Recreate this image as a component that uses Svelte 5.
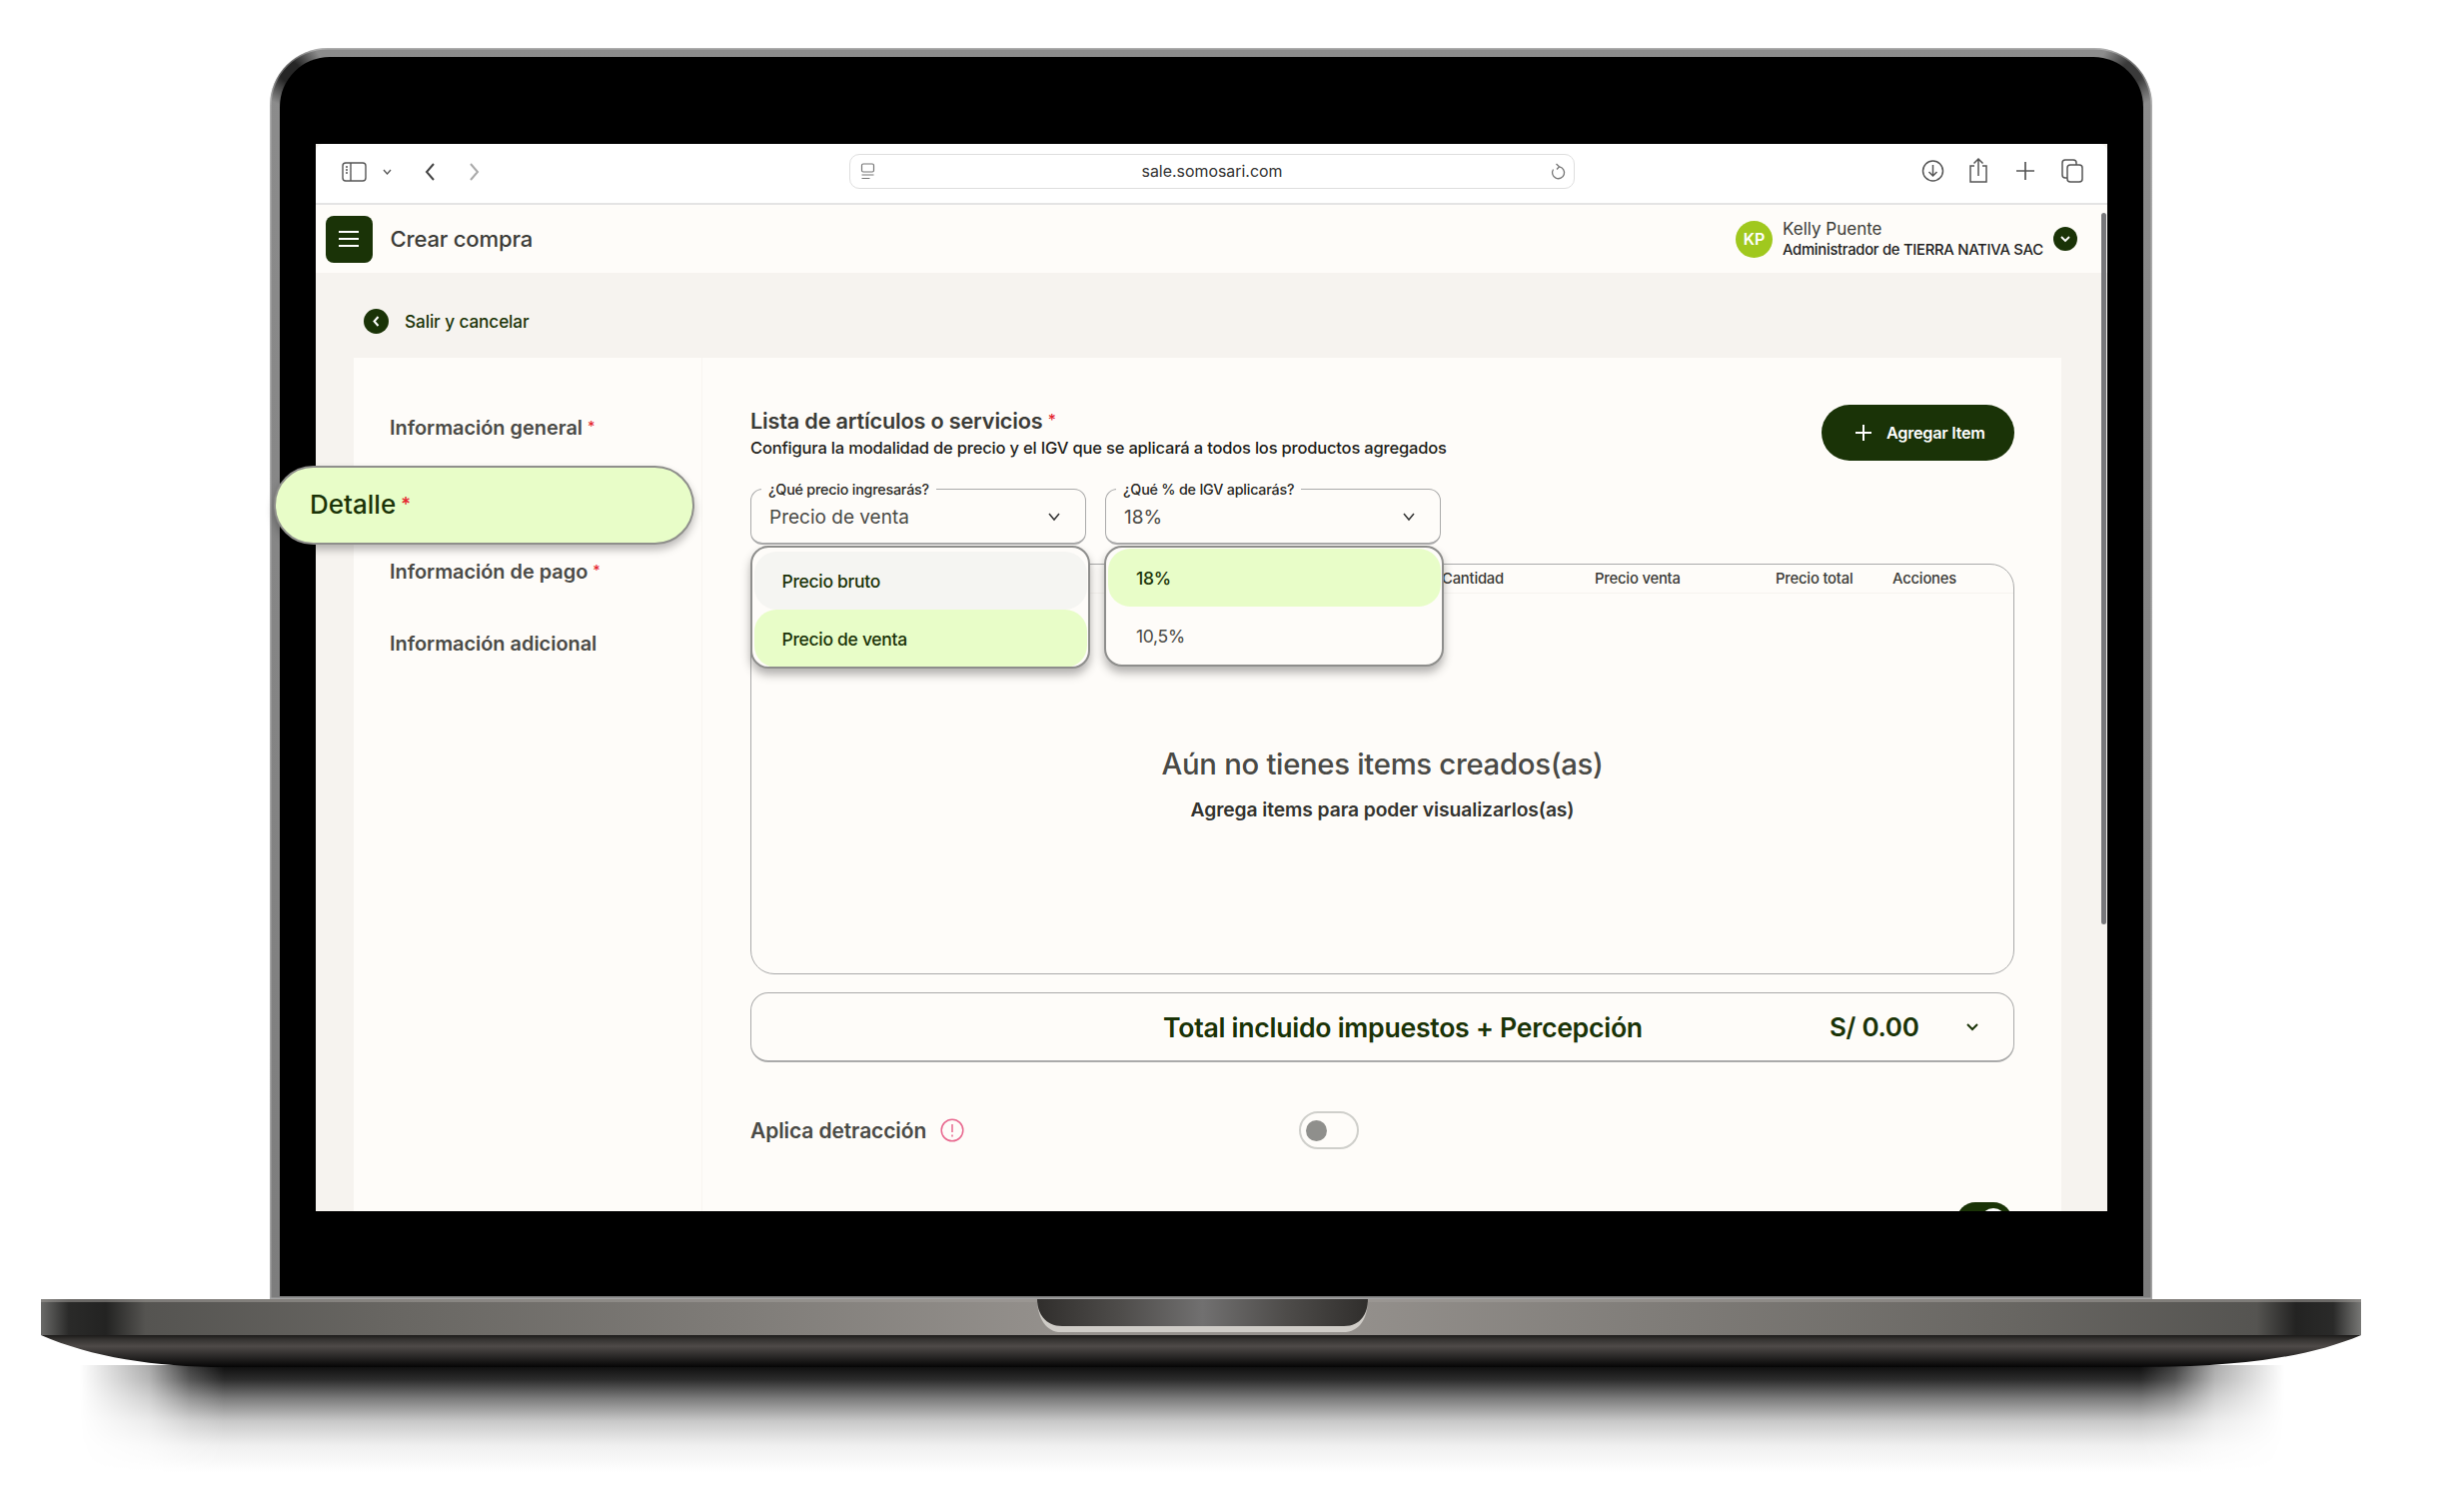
<script>
  const navItems = [
    { label: 'Información general', req: true },
    { label: 'Detalle', req: true, active: true },
    { label: 'Información de pago', req: true },
    { label: 'Información adicional', req: false }
  ];
  const columns = ['', 'Cantidad', 'Precio venta', 'Precio total', 'Acciones'];
</script>

<div class="stage">
  <div class="lid">
    <div class="bezel">
      <div class="screen">
        <div class="toolbar">
          <svg class="tb-left" width="150" height="26" viewBox="0 0 150 26" fill="none" stroke="#555" stroke-width="1.4">
            <rect x="1" y="4" width="23" height="18" rx="3"/>
            <path d="M9 4v18M4 8h2M4 11h2M4 14h2"/>
            <path d="M42 11l3.5 4 3.5-4" stroke-width="1.3"/>
            <path d="M92 5l-7 8 7 8" stroke-width="2" stroke="#444"/>
            <path d="M129 5l7 8-7 8" stroke-width="2" stroke="#aaa"/>
          </svg>
          <div class="url">
            <svg class="url-ic" width="16" height="18" viewBox="0 0 16 18" fill="none" stroke="#777" stroke-width="1.2">
              <rect x="1.5" y="1" width="12" height="8" rx="1.5"/>
              <path d="M1.5 12h12M1.5 15.5h8"/>
            </svg>
            <span>sale.somosari.com</span>
            <svg class="url-re" width="16" height="18" viewBox="0 0 16 18" fill="none" stroke="#777" stroke-width="1.3">
              <path d="M9.500 3.800A6 6 0 1 1 3.500 6.500"/><path d="M6.500 1L9.500 3.800 7 6.500"/>
            </svg>
          </div>
          <svg class="tb-right" width="162" height="28" viewBox="0 0 162 28" fill="none" stroke="#555" stroke-width="1.5">
            <circle cx="11.500" cy="14" r="10"/><path d="M11.500 8v11M7.500 15l4 4 4-4"/>
            <path d="M53 9h-4v16h16V9h-4"/><path d="M57 2v17M52.500 6.500L57 2l4.500 4.500"/>
            <path d="M104 5v18M95 14h18" stroke-width="1.7"/>
            <rect x="146" y="8" width="15" height="17" rx="3"/><path d="M146 21h-2a3 3 0 0 1-3-3V6a3 3 0 0 1 3-3h8a3 3 0 0 1 3 3v2"/>
          </svg>
        </div>

        <header class="appbar">
          <button class="menu" aria-label="Menú">
            <svg width="22" height="18" viewBox="0 0 22 18" stroke="#fff" stroke-width="2.200"><path d="M1 2h20M1 9h20M1 16h20"/></svg>
          </button>
          <h1>Crear compra</h1>
          <div class="user">
            <div class="avatar">KP</div>
            <div class="who">
              <div class="name">Kelly Puente</div>
              <div class="role">Administrador de TIERRA NATIVA SAC</div>
            </div>
            <div class="dot">
              <svg width="12" height="9" viewBox="0 0 12 9" fill="none" stroke="#fff" stroke-width="1.800"><path d="M2 2l4 4 4-4"/></svg>
            </div>
          </div>
        </header>

        <main class="content">
          <div class="back">
            <div class="dot back-dot">
              <svg width="9" height="13" viewBox="0 0 9 13" fill="none" stroke="#fff" stroke-width="2"><path d="M6.500 2L2.500 6.500l4 4.500"/></svg>
            </div>
            <span>Salir y cancelar</span>
          </div>

          <div class="card">
            <nav class="side">
              {#each navItems as item}
                <div class="nav-row">
                  {#if item.active}
                    <div class="pill">{item.label} <i>*</i></div>
                  {:else}
                    <span>{item.label}{#if item.req}&nbsp;<i>*</i>{/if}</span>
                  {/if}
                </div>
              {/each}
            </nav>

            <section class="main">
              <div class="head">
                <div>
                  <h2>Lista de artículos o servicios <i>*</i></h2>
                  <p>Configura la modalidad de precio y el IGV que se aplicará a todos los productos agregados</p>
                </div>
                <button class="add">
                  <svg width="20" height="20" viewBox="0 0 20 20" stroke="#fff" stroke-width="2"><path d="M10 2v16M2 10h16"/></svg>
                  <span>Agregar Item</span>
                </button>
              </div>

              <div class="selects">
                <div class="select">
                  <label>¿Qué precio ingresarás?</label>
                  <span>Precio de venta</span>
                  <svg width="14" height="10" viewBox="0 0 14 10" fill="none" stroke="#333" stroke-width="1.500"><path d="M2 2l5 6 5-6"/></svg>
                  <div class="drop">
                    <div class="opt hover">Precio bruto</div>
                    <div class="opt on">Precio de venta</div>
                  </div>
                </div>
                <div class="select">
                  <label>¿Qué % de IGV aplicarás?</label>
                  <span>18%</span>
                  <svg width="14" height="10" viewBox="0 0 14 10" fill="none" stroke="#333" stroke-width="1.500"><path d="M2 2l5 6 5-6"/></svg>
                  <div class="drop drop2">
                    <div class="opt on">18%</div>
                    <div class="opt plain">10,5%</div>
                  </div>
                </div>
              </div>

              <div class="table">
                <div class="thead">
                  {#each columns as c}<div>{c}</div>{/each}
                </div>
                <div class="empty">
                  <h3>Aún no tienes items creados(as)</h3>
                  <p>Agrega items para poder visualizarlos(as)</p>
                </div>
              </div>

              <div class="total">
                <strong>Total incluido impuestos + Percepción</strong>
                <strong>S/ 0.00</strong>
                <svg width="14" height="10" viewBox="0 0 14 10" fill="none" stroke="#1a3307" stroke-width="2"><path d="M2 2l5 5 5-5"/></svg>
              </div>

              <div class="detr">
                <span>Aplica detracción</span>
                <svg width="24" height="24" viewBox="0 0 24 24" fill="none" stroke="#e8688f" stroke-width="1.500"><circle cx="12" cy="12" r="10.800"/><path d="M12 6v8M12 16.500v2"/></svg>
                <div class="toggle"><b></b></div>
              </div>

              <div class="toggle-on"><b></b></div>
            </section>
          </div>
        </main>

        <div class="scroll"></div>
      </div>
    </div>
  </div>

  <svg class="base" width="2322" height="68" viewBox="0 0 2322 68">
    <defs>
      <linearGradient id="g1" x1="0" x2="1" y1="0" y2="0">
        <stop offset="0" stop-color="#6a6a68"/>
        <stop offset="0.012" stop-color="#2a2a29"/>
        <stop offset="0.028" stop-color="#232322"/>
        <stop offset="0.045" stop-color="#555451"/>
        <stop offset="0.15" stop-color="#686662"/>
        <stop offset="0.45" stop-color="#96928e"/>
        <stop offset="0.55" stop-color="#96928e"/>
        <stop offset="0.85" stop-color="#686662"/>
        <stop offset="0.955" stop-color="#555451"/>
        <stop offset="0.972" stop-color="#232322"/>
        <stop offset="0.988" stop-color="#2a2a29"/>
        <stop offset="1" stop-color="#777775"/>
      </linearGradient>
      <linearGradient id="g2" x1="0" x2="0" y1="0" y2="1">
        <stop offset="0" stop-color="#1c1b1a"/>
        <stop offset="0.12" stop-color="#33312f"/>
        <stop offset="0.35" stop-color="#4e4a48"/>
        <stop offset="0.65" stop-color="#2c2a29"/>
        <stop offset="1" stop-color="#050505"/>
      </linearGradient>
      <linearGradient id="g3" x1="0" x2="1" y1="0" y2="0">
        <stop offset="0" stop-color="#302e2c"/>
        <stop offset="0.25" stop-color="#4e4c4a"/>
        <stop offset="0.5" stop-color="#717070"/>
        <stop offset="0.75" stop-color="#4e4c4a"/>
        <stop offset="1" stop-color="#302e2c"/>
      </linearGradient>
    </defs>
    <path d="M0 36V0H2322V36Z" fill="url(#g1)"/>
    <rect x="0" y="0" width="2322" height="3" fill="#a09d99" opacity=".55"/>
    <path d="M0 36C50 58 115 68 183 68H2099C2200 68 2270 58 2322 36Z" fill="url(#g2)"/>
    <path d="M997 0H1328C1328 16 1322 31 1306 33H1018C1004 31 997 16 997 0Z" fill="#cfccc7"/>
    <path d="M997 0H1328C1328 14 1321 27 1304 27H1022C1005 27 997 14 997 0Z" fill="url(#g3)"/>
  </svg>
  <div class="shadow"></div>
</div>

<style>
  :global(body) { margin: 0; background: #fff; }
  * { box-sizing: border-box; }
  i { color: #e5262f; font-style: normal; font-size: .72em; font-weight: 500; vertical-align: .22em; }
  h1, h2, h3, p { margin: 0; font-weight: inherit; }
  button { border: 0; padding: 0; font: inherit; }

  .stage {
    position: relative;
    width: 2466px;
    height: 1512px;
    overflow: hidden;
    background: #fff;
    padding-top: 48px;
    font-family: Inter, "Liberation Sans", sans-serif;
    color: #33332f;
  }
  .lid {
    margin-left: 270px;
    width: 1884px;
    height: 1252px;
    padding: 9px 9px 3px 10px;
    border-radius: 58px 58px 0 0;
    background:
      radial-gradient(circle 34px at 20px 24px, #262626 30%, transparent),
      radial-gradient(circle 34px at 1864px 24px, #3a3a3a 30%, transparent),
      linear-gradient(#8c8c8c, #7d7d7d);
    box-shadow: inset 0 0 0 1.500px rgba(255, 255, 255, .3);
    position: relative;
    z-index: 2;
  }
  .bezel {
    height: 100%;
    padding: 87px 36px 0 36px;
    border-radius: 50px 50px 0 0;
    background: #000;
  }
  .screen {
    position: relative;
    height: 1068px;
    clip-path: inset(-10px 0 0 -100px);
    background: #f6f3ef;
  }

  .toolbar {
    height: 61px;
    background: #fff;
    border-bottom: 2px solid #e4e4e4;
    border-radius: 8px 8px 0 0;
    display: flex;
    align-items: center;
    padding-left: 26px;
    padding-right: 24px;
  }
  .tb-left { flex: none; margin-top: -3px; }
  .url {
    margin-left: 358px;
    width: 726px;
    height: 35px;
    margin-top: -4px;
    border: 1.500px solid #dedede;
    border-radius: 10px;
    display: flex;
    align-items: center;
    justify-content: space-between;
    padding: 0 8px 0 10px;
    font-size: 15.900px;
    color: #333;
  }
  .url span { transform: translateX(-1px); }
  .tb-right { margin-left: auto; margin-top: -5px; }

  .appbar {
    height: 68px;
    background: #fefcf9;
    display: flex;
    align-items: center;
    padding-left: 9.500px;
    padding-right: 30px;
  }
  .menu {
    width: 47px;
    height: 47px;
    border-radius: 8px;
    background: #1a3307;
    display: flex;
    align-items: center;
    justify-content: center;
  }
  .appbar h1 {
    margin-left: 18px;
    font-size: 22.100px;
    font-weight: 500;
    color: #3b3b37;
    letter-spacing: -0.2px;
  }
  .user { margin-left: auto; display: flex; align-items: center; }
  .avatar {
    width: 37px;
    height: 37px;
    border-radius: 50%;
    background: #a0c81e;
    color: #fff;
    font-size: 16px;
    font-weight: 600;
    display: flex;
    align-items: center;
    justify-content: center;
  }
  .who { margin-left: 10px; width: 271px; padding-top: 1px; }
  .name { font-size: 17px; line-height: 21px; color: #3b3b37; }
  .role { font-size: 14.850px; line-height: 20px; font-weight: 500; color: #20201c; letter-spacing: -0.300px; white-space: nowrap; }
  .dot {
    width: 24px;
    height: 24px;
    border-radius: 50%;
    background: #1a3307;
    display: flex;
    align-items: center;
    justify-content: center;
    flex: none;
  }

  .content { height: 939px; }
  .back {
    height: 85px;
    padding-left: 48px;
    padding-top: 12px;
    display: flex;
    align-items: center;
    gap: 16px;
    font-size: 17.200px;
    font-weight: 500;
    color: #1a3307;
    letter-spacing: -0.100px;
  }
  .back-dot { width: 25px; height: 25px; }
  .card {
    margin: 0 46px 0 38px;
    height: 900px;
    background: #fefcf9;
    display: flex;
  }
  .side {
    width: 349px;
    flex: none;
    padding-top: 34px;
    border-right: 1px solid #f8f5f1;
    font-size: 19.900px;
    font-weight: 600;
    color: #4a4a46;
  }
  .nav-row {
    position: relative;
    height: 72px;
    padding-left: 36px;
    display: flex;
    align-items: center;
  }
  .pill {
    position: absolute;
    left: -80px;
    top: 2px;
    width: 421px;
    height: 79px;
    padding: 0 0 2px 34px;
    display: flex;
    align-items: center;
    gap: 5px;
    border-radius: 40px;
    background: #e8fdc8;
    border: 2px solid #8f8f8c;
    box-shadow: 0 5px 9px rgba(0, 0, 0, .28);
    font-size: 26px;
    font-weight: 500;
    color: #1a3307;
    z-index: 5;
  }

  .main { flex: 1; padding: 47px 47px 0 48px; }
  .head { height: 56px; display: flex; justify-content: space-between; align-items: flex-start; }
  .head h2 { font-size: 21.700px; line-height: 32px; margin-top: 0; padding-bottom: 1px; font-weight: 600; color: #3b3b37; letter-spacing: -0.200px; }
  .head p { font-size: 16.550px; line-height: 20px; font-weight: 500; color: #1f1f1b; letter-spacing: -0.200px; white-space: nowrap; }
  .add {
    width: 193px;
    height: 56px;
    border-radius: 28px;
    background: #1a3307;
    color: #fff;
    display: flex;
    align-items: center;
    padding-left: 32px;
    gap: 13px;
    font-size: 16.300px;
    font-weight: 600;
    font-family: inherit;
  }
  .add span { letter-spacing: -0.300px; }

  .selects { margin-top: 28px; display: flex; gap: 19.500px; }
  .select {
    position: relative;
    width: 335.500px;
    height: 56px;
    border: 1.500px solid #aaa;
    border-bottom-width: 2px;
    border-radius: 12px;
    display: flex;
    align-items: center;
    justify-content: space-between;
    padding: 0 24px 0 18px;
    font-size: 19px;
    color: #4a4a46;
  }
  .select > span { margin-top: 1px; }
  .select > svg { margin-top: 1px; }
  .select label {
    position: absolute;
    left: 10px;
    top: -9px;
    padding: 0 7px;
    background: #fefcf9;
    font-size: 14.300px;
    line-height: 17px;
    font-weight: 500;
    color: #2a2a26;
    letter-spacing: -0.200px;
  }
  .drop {
    position: absolute;
    left: -1.500px;
    top: 56px;
    width: 340px;
    height: 123px;
    padding: 4px 1px 2px 2px;
    background: #fefcf9;
    border: 2px solid #8e8e8c;
    border-radius: 18px;
    box-shadow: 0 6px 10px rgba(0, 0, 0, .3);
    z-index: 4;
    overflow: hidden;
  }
  .drop2 { left: -2px; height: 121px; padding-top: 1px; }
  .opt {
    height: 58px;
    padding-left: 28px;
    border-radius: 22px;
    display: flex;
    align-items: center;
    font-size: 17.500px;
    font-weight: 500;
    letter-spacing: -0.300px;
    color: #1a3307;
  }
  .hover { background: #f5f5f2; }
  .on { background: #e8fdc8; }
  .plain { font-weight: 400; color: #4a4a46; }

  .table {
    position: relative;
    margin-top: 19px;
    height: 411px;
    border: 1.500px solid #aaa;
    border-radius: 24px;
  }
  .thead {
    height: 29px;
    display: grid;
    grid-template-columns: 691px 153px 181px 117px 1fr;
    align-items: center;
    border-bottom: 1px solid #f6f3ef;
    font-size: 14.800px;
    font-weight: 500;
    color: #3b3b37;
    letter-spacing: -0.200px;
  }
  .empty { padding-top: 153px; text-align: center; }
  .empty h3 { font-size: 29.300px; line-height: 36px; font-weight: 500; color: #4a4a46; letter-spacing: -0.300px; }
  .empty p { margin-top: 15px; font-size: 19.300px; line-height: 24px; font-weight: 600; color: #33332f; letter-spacing: -0.100px; }

  .total {
    margin-top: 18px;
    height: 70px;
    padding-left: 412px;
    border: 1.500px solid #aaa;
    border-bottom-width: 2px;
    border-radius: 18px;
    display: grid;
    grid-template-columns: 667px 136px auto;
    align-items: center;
    font-size: 26.700px;
    color: #1a3307;
  }
  .total strong { font-weight: 600; letter-spacing: -0.300px; }
  .total strong + strong { font-size: 26px; }

  .detr {
    margin-top: 49px;
    height: 38px;
    display: grid;
    grid-template-columns: 190px 359px 60px;
    align-items: center;
    font-size: 21px;
    font-weight: 600;
    color: #4a4a46;
    letter-spacing: -0.100px;
  }
  .toggle {
    width: 60px;
    height: 38px;
    border-radius: 19px;
    border: 2px solid #cfcfcb;
    background: #fefcf9;
    display: flex;
    align-items: center;
    padding-left: 5px;
  }
  .toggle b { width: 21px; height: 21px; border-radius: 50%; background: #8f8f8c; }
  .toggle-on {
    margin: 53px 2px 0 auto;
    width: 56px;
    height: 38px;
    border-radius: 19px;
    background: #1a3307;
    display: flex;
    align-items: center;
    justify-content: flex-end;
    padding-right: 6px;
  }
  .toggle-on b { width: 26px; height: 26px; border-radius: 50%; background: #fff; }

  .scroll {
    position: absolute;
    right: 1px;
    top: 69px;
    width: 5px;
    height: 712px;
    border-radius: 3px;
    background: #77777a;
  }

  .base {
    display: block;
    margin: 0 0 0 41px;
    position: relative;
    z-index: 2;
  }
  .shadow {
    position: absolute;
    left: 80px;
    top: 1366px;
    width: 2206px;
    height: 112px;
    background: linear-gradient(#0c0c0c 0%, #2c2c2c 13%, #7c7c7c 30%, #c8c8c8 50%, #f0f0f0 72%, #fff 96%);
    -webkit-mask-image: linear-gradient(to right, transparent 0, rgba(0,0,0,.35) 69px, rgba(0,0,0,.8) 110px, #000 144px, #000 2062px, rgba(0,0,0,.8) 2096px, rgba(0,0,0,.35) 2137px, transparent 2206px);
    mask-image: linear-gradient(to right, transparent 0, rgba(0,0,0,.35) 69px, rgba(0,0,0,.8) 110px, #000 144px, #000 2062px, rgba(0,0,0,.8) 2096px, rgba(0,0,0,.35) 2137px, transparent 2206px);
  }
</style>
